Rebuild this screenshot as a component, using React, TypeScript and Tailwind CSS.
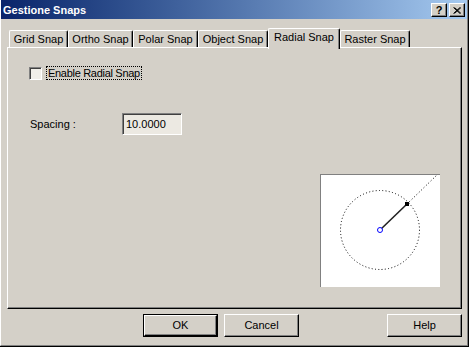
import React from "react";

const font = { fontFamily: '"Liberation Sans", Arial, sans-serif' };

function Tab({ label, w, active }: { label: string; w: number; active?: boolean }) {
  if (active) {
    return (
      <div
        className="relative z-10 h-[21px] mb-[-2px] bg-[#d4d0c8] border-t border-l border-white border-r border-r-black rounded-tl-[2px] rounded-tr-[2px] shadow-[inset_-1px_0_#808080] flex justify-center pt-[2px] text-[11px] text-black leading-[13px]"
        style={{ width: w }}
      >
        {label}
      </div>
    );
  }
  return (
    <div
      className="h-[17px] bg-[#d4d0c8] border-t border-l border-white border-r border-r-black rounded-tl-[2px] rounded-tr-[2px] shadow-[inset_-1px_0_#808080] flex justify-center pt-[2px] text-[11px] text-black leading-[13px]"
      style={{ width: w }}
    >
      {label}
    </div>
  );
}

function Button({ label, def }: { label: string; def?: boolean }) {
  if (def) {
    return (
      <div className="w-[75px] h-[23px] border border-black">
        <div className="w-full h-full border-t border-l border-white border-r border-b border-r-black border-b-black shadow-[inset_-1px_-1px_#808080] flex items-center justify-center text-[11px] text-black">
          {label}
        </div>
      </div>
    );
  }
  return (
    <div className="w-[75px] h-[23px] border-t border-l border-white border-r border-b border-r-black border-b-black shadow-[inset_-1px_-1px_#808080] flex items-center justify-center text-[11px] text-black">
      {label}
    </div>
  );
}

export default function App() {
  return (
    <div style={font} className="w-[469px] h-[347px] bg-[#d4d0c8] border-r border-b border-black flex select-none">
      <div className="flex-1 flex flex-col border-l border-white border-r border-b border-r-[#808080] border-b-[#808080]">
        {/* Title bar */}
        <div className="h-[19px] flex items-center bg-linear-to-r from-[#0a246a] to-[#a6caf0] pl-[2px] pr-[2px]">
          <span className="text-white font-bold text-[11px] leading-none mt-[2px]">Gestione Snaps</span>
          <div className="ml-auto flex gap-[2px] mt-[1px]">
            <div className="w-[16px] h-[14px] bg-[#d4d0c8] border-t border-l border-white border-r border-b border-r-black border-b-black shadow-[inset_-1px_-1px_#808080] flex items-center justify-center text-[11px] font-bold leading-none text-black">
              ?
            </div>
            <div className="w-[16px] h-[14px] bg-[#d4d0c8] border-t border-l border-white border-r border-b border-r-black border-b-black shadow-[inset_-1px_-1px_#808080] flex items-center justify-center">
              <svg width="8" height="7" viewBox="0 0 8 7">
                <path d="M0.5 0.5 L7 6.5 M1.5 0.5 L8 6.5 M7 0.5 L0.5 6.5 M8 0.5 L1.5 6.5" stroke="black" strokeWidth="1" />
              </svg>
            </div>
          </div>
        </div>

        {/* Body */}
        <div className="flex flex-col pl-[6px] pt-[9px]">
          {/* Tabs */}
          <div className="h-[19px] flex items-end pl-[2px]">
            <Tab label="Grid Snap" w={59} />
            <Tab label="Ortho Snap" w={65} />
            <Tab label="Polar Snap" w={65} />
            <Tab label="Object Snap" w={70} />
            <Tab label="Radial Snap" w={72} active />
            <Tab label="Raster Snap" w={70} />
          </div>

          {/* Panel */}
          <div className="w-[455px] h-[262px] border-t border-l border-white border-r border-b border-r-black border-b-black shadow-[inset_-1px_-1px_#808080] flex flex-col">
            <div className="flex items-center pl-[21px] pt-[18px]">
              <div className="w-[13px] h-[13px] border-t border-l border-[#808080] border-r border-b border-r-white border-b-white shadow-[inset_1px_1px_#404040] bg-[#f1efe9]" />
              <div className="ml-[4px] h-[14px] px-[1px] border border-dotted border-black text-[11px] leading-[12px] tracking-[-0.3px] text-black">
                Enable Radial Snap
              </div>
            </div>

            <div className="flex items-center pl-[22px] mt-[33px]">
              <div className="w-[92px] text-[11px] text-black">Spacing :</div>
              <div className="w-[60px] h-[22px] border-t border-l border-[#808080] border-r border-b border-r-white border-b-white shadow-[inset_1px_1px_#404040] bg-[#ece9e2] flex items-center pl-[3px] text-[11px] text-black">
                10.0000
              </div>
            </div>

            <div className="self-end mr-[21px] mt-[39px] w-[120px] h-[113px] bg-white border-t border-l border-[#808080]">
              <svg width="119" height="112" viewBox="0 0 119 112">
                <circle cx="59" cy="55" r="39.5" fill="none" stroke="black" strokeWidth="1" strokeDasharray="1 2.3" />
                <line x1="86" y1="29" x2="118" y2="-2" stroke="black" strokeWidth="1" strokeDasharray="1 2.3" />
                <line x1="59" y1="55" x2="86" y2="29" stroke="#222" strokeWidth="1.6" />
                <rect x="84" y="27" width="4" height="4" fill="black" />
                <circle cx="59" cy="55" r="2.5" fill="white" stroke="#0000ff" strokeWidth="1" />
              </svg>
            </div>
          </div>

          {/* Buttons */}
          <div className="w-[455px] flex mt-[5px] pl-[136px]">
            <Button label="OK" def />
            <div className="ml-[6px]">
              <Button label="Cancel" />
            </div>
            <div className="ml-auto">
              <Button label="Help" />
            </div>
          </div>
        </div>
      </div>
    </div>
  );
}
